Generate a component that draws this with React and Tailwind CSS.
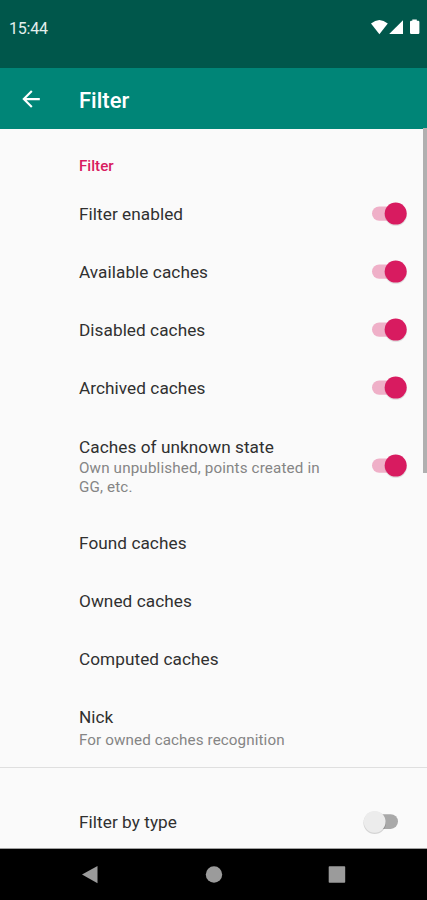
import React from "react";

function Toggle({ on, className = "" }) {
  return (
    <svg className={"shrink-0 " + className} width="48" height="30" viewBox="0 0 48 30">
      {on ? (
        <>
          <rect x="9" y="7.4" width="33" height="14.4" rx="7.2" fill="#efb0c8" />
          <circle cx="32.8" cy="15.8" r="11.2" fill="#000" opacity="0.1" />
          <circle cx="32.7" cy="14.6" r="11" fill="#d81b60" />
        </>
      ) : (
        <>
          <rect x="5" y="7.2" width="30" height="14.8" rx="7.4" fill="#a9a9a9" />
          <circle cx="11.7" cy="15.8" r="11.3" fill="#000" opacity="0.15" />
          <circle cx="11.7" cy="14.8" r="10.9" fill="#ececec" />
        </>
      )}
    </svg>
  );
}

function Title({ children }) {
  return <span className="-mt-px mb-px block whitespace-nowrap text-[17.2px] leading-[22px] tracking-[0.06px] text-[#303030]">{children}</span>;
}

const switches = ["Filter enabled", "Available caches", "Disabled caches", "Archived caches"];

const links = ["Found caches", "Owned caches", "Computed caches"];

export default function App() {
  return (
    <div className="flex h-[900px] w-[427px] flex-col overflow-hidden bg-[#fafafa] font-[Roboto,sans-serif]">
      <div className="flex h-[68px] shrink-0 items-start justify-between bg-[#00574b] pl-[9px] pr-[6px]">
        <span className="mt-[19px] text-base leading-5 tracking-[-0.2px] text-[#e4efed]">15:44</span>
        <svg className="mt-[17px]" width="52" height="20" viewBox="369 17 52 20" fill="#fff">
          <path d="M371 23.6Q379.3 16.6 387.8 23.6L379.4 34.2Z" />
          <path d="M403 20.2V34H389.2Z" />
          <path d="M412.3 20.7V19.5H416.8V20.7H418.2Q419.4 20.7 419.4 21.9V32.8Q419.4 34 418.2 34H411.2Q410 34 410 32.8V21.9Q410 20.7 411.2 20.7Z" />
        </svg>
      </div>
      <header className="flex h-[60.5px] shrink-0 items-center bg-[#008577] pl-[20px]">
        <svg className="mt-[1px]" width="22" height="22" viewBox="20 87.4 22 22" fill="none" stroke="#fff" strokeWidth="2.1">
          <path d="M39.8 98.5H24M31.8 90.5L23.8 98.5L31.8 106.5" />
        </svg>
        <h1 className="ml-[37px] mt-[5px] text-[22px] font-medium leading-7 text-white">Filter</h1>
      </header>
      <main className="-mt-[0.5px] flex min-h-0 flex-1">
        <div className="min-w-0 flex-1">
          <h2 className="h-[58px] pl-[79px] pt-[28px] text-[15.2px] font-medium leading-5 text-[#d81b60]">Filter</h2>
          {switches.map((name) => (
            <div key={name} className="flex h-[58px] items-center justify-between pl-[79px] pr-[12px]">
              <Title>{name}</Title>
              <Toggle on className="-mt-[2px]" />
            </div>
          ))}
          <div className="flex h-[97px] items-center justify-between pl-[79px] pr-[12px]">
            <div>
              <Title>Caches of unknown state</Title>
              <p className="w-[260px] text-[15.2px] leading-[19px] tracking-[0.15px] text-[#858585]">
                Own unpublished, points created in
                <br />
                GG, etc.
              </p>
            </div>
            <Toggle on className="-mt-[1px]" />
          </div>
          {links.map((name) => (
            <div key={name} className="flex h-[58px] items-center pl-[79px]">
              <Title>{name}</Title>
            </div>
          ))}
          <div className="h-[78px] pl-[79px] pt-[18px]">
            <Title>Nick</Title>
            <p className="mt-[2px] text-[15.2px] leading-[21px] tracking-[0.1px] text-[#858585]">For owned caches recognition</p>
          </div>
          <div className="-mr-[4px] h-px bg-[#dfdfdf]" />
          <div className="mt-[26px] flex h-[58px] items-center justify-between pl-[79px] pr-[12px]">
            <Title>Filter by type</Title>
            <Toggle className="-mt-[2px]" />
          </div>
        </div>
        <div className="h-[345px] w-[4px] shrink-0 bg-[#b0b0b0]" />
      </main>
      <nav className="h-[52px] shrink-0 border-t border-[#a0a0a0] bg-black">
        <svg width="427" height="51" viewBox="0 849 427 51" fill="#9b9b9b">
          <path d="M82 874.6L97.5 866V883.2Z" />
          <circle cx="214" cy="874.5" r="8.2" />
          <rect x="328.7" y="866.2" width="16.5" height="16.5" rx="0.8" />
        </svg>
      </nav>
    </div>
  );
}
